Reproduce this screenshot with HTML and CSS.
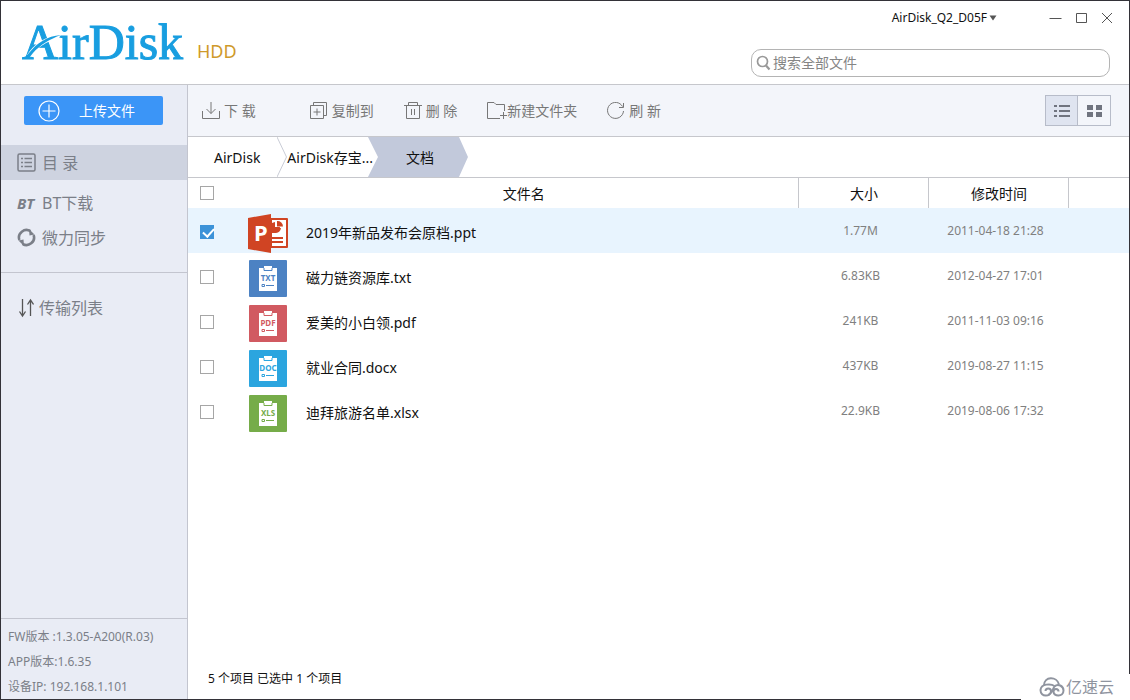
FILE: index.html
```html
<!DOCTYPE html>
<html lang="zh-CN">
<head>
<meta charset="utf-8">
<title>AirDisk HDD</title>
<link rel="stylesheet" href="styles.css">
</head>
<body>
<div class="window">
  <header class="header">
    <div class="brand">
      <svg class="logo" width="172" height="64" viewBox="0 0 172 64" role="img" aria-label="AirDisk">
        <text class="logo-text" x="2" y="49">AirDisk</text>
        <path d="M7 45C14 34 25 26 41 25L38 29C27 31 18 37 12 45Z" fill="#fff"/>
        <path d="M4 48L9 43C17 33 27 26 41 25C30 29 20 35 13 43L9 48Z" fill="#189ee0"/>
      </svg>
      <span class="brand-tag">HDD</span>
    </div>
    <div class="header-right">
      <div class="titlebar">
        <button class="device" type="button">AirDisk_Q2_D05F<svg width="8" height="6" viewBox="0 0 8 6"><path d="M0.500 0.500H7.500L4 5.500Z" fill="#555"/></svg></button>
        <div class="win-buttons">
          <button type="button" aria-label="最小化"><svg width="13" height="13" viewBox="0 0 13 13"><path d="M0.500 6.500H12.500"/></svg></button>
          <button type="button" aria-label="最大化"><svg width="13" height="13" viewBox="0 0 13 13"><path d="M1.500 1.500H11.500V10.500H1.500Z"/></svg></button>
          <button type="button" aria-label="关闭"><svg width="13" height="13" viewBox="0 0 13 13"><path d="M1 1L11 11M11 1L1 11"/></svg></button>
        </div>
      </div>
      <label class="search">
        <svg width="16" height="16" viewBox="0 0 16 16" fill="none" stroke="#999"><circle cx="6.500" cy="6.500" r="5" stroke-width="1.700"/><path d="M10 10.500L13.500 14.500" stroke-width="2.200"/></svg>
        <input type="text" placeholder="搜索全部文件" aria-label="搜索全部文件">
      </label>
    </div>
  </header>

  <div class="body">
    <aside class="sidebar">
      <button class="upload" type="button">
        <svg width="22" height="22" viewBox="0 0 22 22" fill="none" stroke="#fff" stroke-width="1.200"><circle cx="11" cy="11" r="10"/><path d="M11 4.500V17.500M4.500 11H17.500"/></svg>
        <span>上传文件</span>
      </button>
      <nav class="side-nav">
        <a class="side-link active" href="#">
          <svg width="19" height="19" viewBox="0 0 19 19" fill="none" stroke="#7b7f88"><rect x="1" y="1" width="17" height="17" rx="1.500" stroke-width="1.500"/><path d="M7.500 5.500H15M7.500 9.500H15M7.500 13.500H15M4 5.500H6M4 9.500H6M4 13.500H6" stroke-width="1.500"/></svg>
          <span>目 录</span>
        </a>
        <a class="side-link" href="#">
          <span class="bt">BT</span>
          <span>BT下载</span>
        </a>
        <a class="side-link" href="#">
          <svg width="19" height="19" viewBox="0 0 19 19" fill="none" stroke="#7b7f88" stroke-width="2.600"><path d="M2.400 12A7.500 7.500 0 0 1 13.500 3.200M16.600 7A7.500 7.500 0 0 1 5.500 15.800"/><path d="M12 1L17.500 6.500L12.500 7.500ZM7 18L1.500 12.500L6.500 11.500Z" fill="#7b7f88" stroke="none"/></svg>
          <span>微力同步</span>
        </a>
      </nav>
      <nav class="side-nav transfer">
        <a class="side-link" href="#">
          <svg width="16" height="20" viewBox="0 0 16 20" fill="none" stroke="#555" stroke-width="1.300"><path d="M4.500 1V18M1.500 13.500L4.500 18L7.500 13.500M12.500 18V2M9.500 6.500L12.500 2L15.500 6.500"/></svg>
          <span>传输列表</span>
        </a>
      </nav>
      <div class="versions">
        <div>FW版本 :1.3.05-A200(R.03)</div>
        <div>APP版本:1.6.35</div>
        <div>设备IP: 192.168.1.101</div>
      </div>
    </aside>

    <main class="main">
      <div class="toolbar">
        <div class="tools">
          <button class="tool wide" type="button"><svg width="18" height="18" viewBox="0 0 18 18"><path d="M0.500 9V16.500H17.500V9M9 0V11.500M4.500 7L9 11.500L13.500 7"/></svg>下 载</button>
          <button class="tool" type="button"><svg width="18" height="18" viewBox="0 0 18 18"><path d="M0.500 3.500H13.500V16.500H0.500ZM3.500 3.500V0.500H16.500V13.500H13.500M7 6.500V13.500M3.500 10H10.500"/></svg>复制到</button>
          <button class="tool" type="button"><svg width="18" height="18" viewBox="0 0 18 18"><path d="M0 3.500H18M4.500 3V0.500H13.500V3M2.500 4V16.500H15.500V4M7.500 7V13M10.500 7V13"/></svg>删 除</button>
          <button class="tool tight" type="button"><svg width="20" height="18" viewBox="0 0 20 18"><path d="M13 16.500H0.500V0.500H7L9 2.500H17.500V9M16.500 10V17M13 13.500H20"/></svg>新建文件夹</button>
          <button class="tool" type="button"><svg width="18" height="18" viewBox="0 0 18 18"><path d="M15.500 4.500A8 8 0 1 0 16.500 9M12 5.500H16.500V1"/></svg>刷 新</button>
        </div>
        <div class="views">
          <button class="view on" type="button" aria-label="列表"><svg width="16" height="12" viewBox="0 0 16 12"><path d="M0 0H3V2H0ZM5 0H16V2H5ZM0 5H3V7H0ZM5 5H16V7H5ZM0 10H3V12H0ZM5 10H16V12H5Z"/></svg></button>
          <button class="view" type="button" aria-label="图标"><svg width="15" height="12" viewBox="0 0 15 12"><path d="M0 0H6V5H0ZM9 0H15V5H9ZM0 7H6V12H0ZM9 7H15V12H9Z"/></svg></button>
        </div>
      </div>

      <nav class="crumbs">
        <a class="crumb root" href="#">AirDisk</a>
        <svg width="10" height="40" viewBox="0 0 10 40" fill="none" stroke="#c9ccd6"><path d="M0 0L9.500 20L0 40"/></svg>
        <a class="crumb" href="#">AirDisk存宝...</a>
        <a class="crumb current" href="#">文档</a>
      </nav>

      <table class="files">
        <colgroup><col class="c-check"><col><col class="c-size"><col class="c-date"><col class="c-end"></colgroup>
        <thead>
          <tr><th class="check"><input type="checkbox" aria-label="全选"></th><th>文件名</th><th class="line">大小</th><th class="line">修改时间</th><th class="line"></th></tr>
        </thead>
        <tbody>
          <tr class="selected">
            <td class="check"><input type="checkbox" checked aria-label="2019年新品发布会原档.ppt"></td>
            <td><div class="name">
              <svg width="40" height="40" viewBox="0 0 40 40"><path d="M23 5H39Q40 5 40 6V34Q40 35 39 35H23Z" fill="#d04423"/><path d="M24 7H38V33H24Z" fill="#fff"/><path d="M27 10V19A5 5 0 0 0 32 14H27Z" fill="#d04423"/><path d="M24 10A6 6 0 0 0 24 20H28A6 6 0 0 0 33 15H27V9Z" fill="#d04423"/><path d="M29 8A5.500 5.500 0 0 1 35 13.500H29Z" fill="#d04423"/><path d="M24 24H35V26H24ZM24 28H35V30H24Z" fill="#d04423"/><path d="M0 5L23 1V40L0 36Z" fill="#d04423"/><text class="ppt-letter" x="6" y="28">P</text></svg>
              <span>2019年新品发布会原档.ppt</span></div></td>
            <td class="meta">1.77M</td><td class="meta">2011-04-18 21:28</td><td></td>
          </tr>
          <tr>
            <td class="check"><input type="checkbox" aria-label="磁力链资源库.txt"></td>
            <td><div class="name">
              <svg class="doc txt" width="40" height="38" viewBox="0 0 40 38"><rect x="1" y="1" width="38" height="37" rx="1"/><path class="paper" d="M11 9H16V7H24V9H29V32H11Z"/><path class="clip" d="M16 9V11.500H24V9"/><text x="20" y="22">TXT</text><path class="clip" d="M14 25.500H16.500V27.500H14ZM18 26.500H26"/></svg>
              <span>磁力链资源库.txt</span></div></td>
            <td class="meta">6.83KB</td><td class="meta">2012-04-27 17:01</td><td></td>
          </tr>
          <tr>
            <td class="check"><input type="checkbox" aria-label="爱美的小白领.pdf"></td>
            <td><div class="name">
              <svg class="doc pdf" width="40" height="38" viewBox="0 0 40 38"><rect x="1" y="1" width="38" height="37" rx="1"/><path class="paper" d="M11 9H16V7H24V9H29V32H11Z"/><path class="clip" d="M16 9V11.500H24V9"/><text x="20" y="22">PDF</text><path class="clip" d="M14 25.500H16.500V27.500H14ZM18 26.500H26"/></svg>
              <span>爱美的小白领.pdf</span></div></td>
            <td class="meta">241KB</td><td class="meta">2011-11-03 09:16</td><td></td>
          </tr>
          <tr>
            <td class="check"><input type="checkbox" aria-label="就业合同.docx"></td>
            <td><div class="name">
              <svg class="doc docx" width="40" height="38" viewBox="0 0 40 38"><rect x="1" y="1" width="38" height="37" rx="1"/><path class="paper" d="M11 9H16V7H24V9H29V32H11Z"/><path class="clip" d="M16 9V11.500H24V9"/><text x="20" y="22">DOC</text><path class="clip" d="M14 25.500H16.500V27.500H14ZM18 26.500H26"/></svg>
              <span>就业合同.docx</span></div></td>
            <td class="meta">437KB</td><td class="meta">2019-08-27 11:15</td><td></td>
          </tr>
          <tr>
            <td class="check"><input type="checkbox" aria-label="迪拜旅游名单.xlsx"></td>
            <td><div class="name">
              <svg class="doc xls" width="40" height="38" viewBox="0 0 40 38"><rect x="1" y="1" width="38" height="37" rx="1"/><path class="paper" d="M11 9H16V7H24V9H29V32H11Z"/><path class="clip" d="M16 9V11.500H24V9"/><text x="20" y="22">XLS</text><path class="clip" d="M14 25.500H16.500V27.500H14ZM18 26.500H26"/></svg>
              <span>迪拜旅游名单.xlsx</span></div></td>
            <td class="meta">22.9KB</td><td class="meta">2019-08-06 17:32</td><td></td>
          </tr>
        </tbody>
      </table>

      <div class="status">5 个项目 已选中 1 个项目</div>
    </main>
  </div>

  <div class="watermark">
    <svg width="26" height="20" viewBox="0 0 26 20" fill="none" stroke="#8f949f" stroke-width="2"><path d="M5 8.500C5 -1 18 -1 20 7.500"/><path d="M15.500 9C12 6.500 2 6.500 1.500 13C1.500 20.500 12 20 12 14C12 10.500 6.500 10.500 6.500 14"/><path d="M9 18C13 17 13.500 12 15.500 9.500C19 6 24.500 9 24.500 13.500C24.500 20 14.500 20 14.500 14.500C14.500 11 19.500 11 19.500 14.500"/></svg>
    <span>亿速云</span>
  </div>
</div>
</body>
</html>
```
FILE: styles.css
```css
* { box-sizing: border-box; }

body {
  margin: 0;
  font-family: "Noto Sans", "Noto Sans CJK SC", sans-serif;
  font-size: 14px;
  line-height: 20px;
  color: #111;
}

button {
  font: inherit;
  color: inherit;
  border: 0;
  padding: 0;
  background: none;
}

a { color: inherit; text-decoration: none; }
svg { display: block; flex: none; }

.window {
  position: relative;
  display: flex;
  flex-direction: column;
  min-height: 100vh;
  border: 1px solid #333238;
  background: #fff;
}

.header {
  display: flex;
  justify-content: space-between;
  height: 84px;
  border-bottom: 1px solid #c6c7cc;
}

.brand { display: flex; align-items: flex-start; gap: 5px; padding: 9px 0 0 19px; }
.logo-text {
  font-family: "Liberation Serif", serif;
  font-size: 50px;
  fill: #189ee0;
  stroke: #189ee0;
  stroke-width: 1px;
}
.brand-tag { padding-top: 31px; font-size: 18px; color: #cf9a2b; }

.header-right {
  display: flex;
  flex-direction: column;
  width: 378px;
  padding: 7px 19px 0 0;
  gap: 21px;
}

.titlebar { display: flex; justify-content: flex-end; align-items: center; gap: 52px; height: 20px; margin-right: -4px; }
.device { display: flex; align-items: center; gap: 2px; font-size: 12px; }
.win-buttons { display: flex; gap: 13px; }
.win-buttons svg { fill: none; stroke: #555; }

.search {
  display: flex;
  align-items: center;
  gap: 1px;
  height: 28px;
  padding: 0 4px;
  border: 1px solid #b4b4b4;
  border-radius: 10px;
}
.search input {
  flex: 1;
  min-width: 0;
  border: 0;
  padding: 0;
  outline: 0;
  font: inherit;
  background: none;
}
.search input::placeholder { color: #858585; opacity: 1; }

.body { flex: 1; display: flex; }

.sidebar {
  display: flex;
  flex-direction: column;
  width: 187px;
  border-right: 1px solid #c3c5cf;
  background: #e9ecf5;
  color: #7b7f88;
}

.upload {
  display: flex;
  align-items: center;
  gap: 19px;
  height: 29px;
  margin: 11px 24px 20px 23px;
  padding-left: 14px;
  border-radius: 2px;
  background: #3b95f7;
  color: #fff;
}

.side-nav { display: flex; flex-direction: column; padding-bottom: 17px; }
.side-link {
  display: flex;
  align-items: center;
  gap: 6px;
  height: 35px;
  padding-left: 16px;
  font-size: 16px;
}
.side-link.active { margin-bottom: 5px; background: #ced3e0; }
.bt { width: 19px; font-size: 15px; font-weight: 700; font-style: italic; }
.transfer { padding-top: 17px; border-top: 1px solid #c3c5cf; }
.transfer .side-link { gap: 5px; padding-left: 17px; }

.versions {
  margin-top: auto;
  padding: 5px 0 0 7px;
  border-top: 1px solid #c3c5cf;
  font-size: 12px;
  line-height: 25px;
}

.main { flex: 1; min-width: 0; display: flex; flex-direction: column; }

.toolbar {
  display: flex;
  justify-content: space-between;
  align-items: center;
  height: 52px;
  padding: 0 18px 0 14px;
  border-bottom: 1px solid #c6c7cc;
  background: #f3f5fa;
}
.tools { display: flex; gap: 30px; color: #777; }
.tool { display: flex; align-items: center; gap: 4px; white-space: nowrap; }
.tool svg { fill: none; stroke: #777; }
.tool.tight { gap: 0; }
.tool.wide { margin-right: 24px; }

.views { display: flex; border: 1px solid #b7bcc9; }
.view { display: grid; place-items: center; width: 32px; height: 29px; }
.view.on { border-right: 1px solid #b7bcc9; background: #dfe4f0; }
.view svg { fill: #70747f; }

.crumbs { display: flex; height: 41px; border-bottom: 1px solid #c6c7cc; }
.crumb { line-height: 41px; }
.crumb.root { padding: 0 17px 0 26px; }
.crumb.current {
  width: 100px;
  margin-left: -5px;
  padding-right: 4px;
  padding-left: 8px;
  text-align: center;
  background: #c2c9db;
  clip-path: polygon(0 0, 91% 0, 100% 50%, 91% 100%, 0 100%, 10% 50%);
}

.files { width: 100%; table-layout: fixed; border-collapse: collapse; }
.c-check { width: 60px; }
.c-size { width: 130px; }
.c-date { width: 140px; }
.c-end { width: 61px; }
.files th { height: 30px; padding: 2px 0 0 2px; font-weight: 400; }
.files th.line { border-left: 1px solid #c6c7cc; }
.files th.check { padding: 0 0 0 12px; }
.files td { height: 45px; padding: 0; }
.files td.check { padding: 3px 0 0 12px; }
.files .meta { padding-right: 5px; text-align: center; font-size: 12px; color: #808080; }
.selected { background: #e8f4fe; }

.check input {
  appearance: none;
  display: block;
  width: 14px;
  height: 14px;
  margin: 0;
  border: 1px solid #a6a6a6;
  background: #fff;
}
.check input:checked {
  border-color: #3c92d8;
  background: #3c92d8;
}
.check input:checked::after {
  content: "";
  display: block;
  width: 5px;
  height: 9px;
  margin: 0 0 0 4px;
  border: solid #fff;
  border-width: 0 2px 2px 0;
  transform: rotate(42deg);
}

.name { display: flex; align-items: center; gap: 18px; padding-top: 5px; }
.ppt-letter { font-size: 22px; font-weight: 700; fill: #fff; }
.doc { fill: var(--tone); }
.doc .paper { fill: #fff; }
.doc .clip { fill: none; stroke: var(--tone); }
.doc text { font-size: 8px; font-weight: 700; text-anchor: middle; }
.txt { --tone: #4c82c3; }
.pdf { --tone: #d15a61; }
.docx { --tone: #2ba5df; }
.xls { --tone: #76ac49; }

.status { margin-top: auto; padding: 0 0 10px 20px; font-size: 12px; }

.watermark {
  position: absolute;
  right: -1px;
  bottom: -1px;
  display: flex;
  align-items: center;
  gap: 1px;
  width: 109px;
  height: 26px;
  padding-left: 18px;
  background: #fff;
  font-size: 16px;
  color: #8f949f;
}
```
